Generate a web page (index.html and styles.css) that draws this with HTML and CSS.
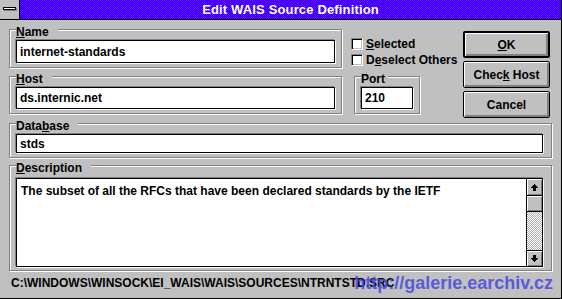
FILE: index.html
```html
<!DOCTYPE html>
<html lang="en">
<head>
  <meta charset="UTF-8">
  <title>Edit WAIS Source Definition</title>
  <link rel="stylesheet" href="styles.css">
</head>
<body>
  <div class="window">
    <div class="titlebar">
      <div class="sysmenu"><span class="sysmenu-bar"></span></div>
      <div class="caption">Edit WAIS Source Definition</div>
    </div>

    <div class="client">
      <div class="top">
        <div class="fields">
          <div class="row">
            <div class="group group-wide">
              <div class="group-label"><u>N</u>ame</div>
              <div class="edit">internet-standards</div>
            </div>
            <div class="checks">
              <div class="check"><span class="box"></span><span><u>S</u>elected</span></div>
              <div class="check"><span class="box"></span><span>D<u>e</u>select Others</span></div>
            </div>
          </div>
          <div class="row">
            <div class="group group-wide">
              <div class="group-label"><u>H</u>ost</div>
              <div class="edit edit-mid">ds.internic.net</div>
            </div>
            <div class="group group-port">
              <div class="group-label label-tight">Port</div>
              <div class="edit edit-mid">210</div>
            </div>
          </div>
        </div>
        <div class="buttons">
          <div class="btn btn-default"><span><u>O</u>K</span></div>
          <div class="btn"><span>Chec<u>k</u> Host</span></div>
          <div class="btn"><span>Cancel</span></div>
        </div>
      </div>

      <div class="group group-db">
        <div class="group-label">Data<u>b</u>ase</div>
        <div class="edit edit-short">stds</div>
      </div>

      <div class="group group-desc">
        <div class="group-label"><u>D</u>escription</div>
        <div class="memo">
          <div class="memo-text">The subset of all the RFCs that have been declared standards by the IETF</div>
          <div class="scrollbar">
            <div class="sb-btn sb-up">
              <svg width="7" height="7" viewBox="0 0 7 7" shape-rendering="crispEdges"><path d="M3 0h1v1h1v1h1v1h1v1h-2v3h-3v-3h-2v-1h1v-1h1v-1h1z" fill="#000"/></svg>
            </div>
            <div class="sb-thumb"></div>
            <div class="sb-track"></div>
            <div class="sb-btn sb-down">
              <svg width="7" height="7" viewBox="0 0 7 7" shape-rendering="crispEdges"><path d="M2 0h3v3h2v1h-1v1h-1v1h-1v1h-1v-1h-1v-1h-1v-1h-1v-1h2z" fill="#000"/></svg>
            </div>
          </div>
        </div>
      </div>

      <div class="path">C:\WINDOWS\WINSOCK\EI_WAIS\WAIS\SOURCES\NTRNTSTD.SRC</div>
    </div>

    <div class="watermark">http://galerie.earchiv.cz</div>
  </div>
</body>
</html>
```

FILE: styles.css
```css
* { box-sizing: border-box; }
html, body { margin: 0; background: #c0c0c0; }
body { font: bold 12px/12px "Liberation Sans", Arial, sans-serif; color: #000; }
u { text-underline-offset: 1px; }

.window { position: relative; width: 562px; height: 299px; background: #c0c0c0; border-right: 1px solid #000; border-bottom: 1px solid #000; overflow: hidden; }

/* title bar */
.titlebar { display: flex; height: 20px; border-bottom: 1px solid #000; }
.sysmenu { width: 20px; border-right: 1px solid #000; background: #c0c0c0; padding: 7px 0 0 3px; }
.sysmenu-bar { display: block; width: 13px; height: 3px; border: 1px solid #000; background: #fff; box-shadow: 1px 1px 0 #808080; }
.caption { flex: 1; color: #fff; font-size: 13px; line-height: 19px; letter-spacing: 0.15px; text-align: center; background: repeating-conic-gradient(#0000ff 0 25%, #8c00ff 0 50%) 0 0 / 2px 2px; }

/* dialog body */
.client { padding: 9px 9px 0 9px; }
.top { display: flex; align-items: flex-start; }
.fields { display: flex; flex-direction: column; gap: 8px; }
.row { display: flex; align-items: flex-start; }

.group { border: 1px solid #808080; box-shadow: inset 1px 1px 0 #fff, 1px 1px 0 #fff; padding: 0 6px 4px 6px; }
.group-wide { width: 333px; }
.group-port { width: 66px; margin-left: 12px; }
.group-db { margin-top: 5px; padding-right: 8px; }
.group-desc { margin-top: 7px; padding-right: 8px; padding-bottom: 3px; }
.group-label { width: max-content; height: 12px; margin-top: -4px; padding-right: 9px; background: #c0c0c0; }
.label-tight { padding-right: 3px; }

.edit { margin-top: 2px; height: 23px; border: 1px solid #000; background: #fff; box-shadow: -1px -1px 0 #808080, 1px 1px 0 #fff; display: flex; align-items: center; padding-left: 3px; }
.edit-mid { height: 22px; }
.edit-short { height: 19px; }

.checks { display: flex; flex-direction: column; gap: 4px; margin: 9px 0 0 9px; }
.check { display: flex; align-items: center; gap: 3px; height: 12px; }
.box { width: 12px; height: 12px; background: #fff; border: 1px solid; border-color: #808080 #fff #fff #808080; box-shadow: inset 1px 1px 0 #000, inset -1px -1px 0 #c0c0c0; }

.buttons { display: flex; flex-direction: column; gap: 3px; width: 87px; margin: 2px 2px 0 auto; }
.btn { height: 27px; border: 1px solid #000; border-radius: 2px; background: #c0c0c0; box-shadow: inset 1px 1px 0 #fff, inset -2px -2px 0 #808080; display: flex; align-items: center; justify-content: center; }
.btn-default { border-width: 2px; }

.memo { margin-top: 4px; height: 89px; border: 1px solid #000; background: #fff; box-shadow: -1px -1px 0 #808080, 1px 1px 0 #fff; display: flex; }
.memo-text { flex: 1; padding: 6px 0 0 4px; }

.scrollbar { width: 16px; border-left: 1px solid #000; display: flex; flex-direction: column; }
.sb-btn { display: flex; align-items: center; justify-content: center; background: #c0c0c0; box-shadow: inset 1px 1px 0 #fff, inset -1px -1px 0 #808080; }
.sb-up { height: 17px; border-bottom: 1px solid #000; }
.sb-down { height: 16px; border-top: 1px solid #000; }
.sb-thumb { height: 16px; border-bottom: 1px solid #000; background: #c0c0c0; box-shadow: inset 1px 1px 0 #fff, inset -1px -1px 0 #808080; }
.sb-track { flex: 1; background: repeating-conic-gradient(#fff 0 25%, #b0b0b0 0 50%) 0 0 / 2px 2px; }

.path { margin-top: 6px; padding-left: 2px; }

/* site watermark printed over the capture */
.watermark { position: absolute; top: 274px; right: 8px; font-size: 18px; line-height: 18px; color: rgba(70, 70, 225, 0.85); }
```
